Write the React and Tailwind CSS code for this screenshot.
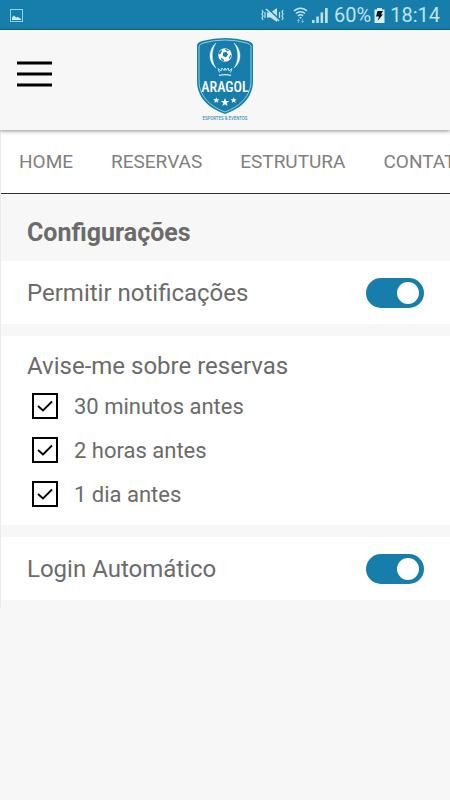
import React, { useState } from 'react';

const navItems = ['HOME', 'RESERVAS', 'ESTRUTURA', 'CONTATO'];

const StatusBar = () => (
    <div className="flex h-[30px] items-center justify-between border-b border-[#136a8f] bg-[#177eab] px-[10px] pt-px text-[#bfe3f0]">
        <svg width="13" height="13" viewBox="0 0 13 13" fill="none" aria-hidden="true">
            <rect x="0.5" y="0.5" width="12" height="12" stroke="#8fd0ea" />
            <path d="M2 11V8.5L4 6.5L6 8.5L8 8L11 10V11Z" fill="#c8ecf8" />
        </svg>
        <div className="flex items-center">
            <svg width="23" height="18" viewBox="0 0 23 18" fill="none" stroke="currentColor" aria-hidden="true">
                <path d="M6 6.5H9.5L16 2V16L9.5 11.5H6Z" fill="currentColor" stroke="none" />
                <path d="M6 2L18.5 13.5" stroke="#177eab" strokeWidth="1.6" />
                <path d="M5 3L18 15" strokeWidth="1.6" />
                <path d="M1 4L2 6L1 8L2 10L1 12L2 14M4 6V12" strokeWidth="1.2" />
                <path d="M22 4L21 6L22 8L21 10L22 12L21 14M18.5 6V12" strokeWidth="1.2" />
            </svg>
            <svg className="ml-[9px]" width="15" height="18" viewBox="0 0 15 18" fill="none" stroke="currentColor" aria-hidden="true">
                <path d="M1 5C4.5 1.2 10.5 1.2 14 5M3 7.5C5.5 5 9.5 5 12 7.5M5 10C6.5 8.6 8.5 8.6 10 10" strokeWidth="1.5" />
                <circle cx="7.5" cy="11.7" r="1" fill="currentColor" stroke="none" />
                <path d="M5.5 17V13.5M4 15L5.5 13.5L7 15M9.5 13V16.5M8 15L9.5 16.5L11 15" strokeWidth="0.8" opacity="0.65" />
            </svg>
            <svg className="ml-1" width="16" height="16" viewBox="0 0 16 16" fill="currentColor" aria-hidden="true">
                <path d="M0 13H2.5V16H0ZM4.3 9.5H6.8V16H4.3ZM8.6 5.5H11.1V16H8.6ZM13 1H15.7V16H13Z" />
            </svg>
            <span className="ml-[6px] text-[20px] leading-7">60%</span>
            <svg className="ml-[3px]" width="11" height="15" viewBox="0 0 11 15" aria-hidden="true">
                <path d="M3 0H8V1.5H10.5V15H0.5V1.5H3Z" fill="#d9eff7" />
                <path d="M3.5 3H9L7 6.5H9L3.5 13L5 8.5H2Z" fill="#0b1a20" />
            </svg>
            <span className="ml-[5px] text-[20px] leading-7">18:14</span>
        </div>
    </div>
);

const Logo = () => (
    <svg width="62" height="86" viewBox="0 0 62 86" role="img" aria-label="Aragol Esportes & Eventos">
        <path
            d="M3 8Q4 5 8 4Q20 1 31 1Q42 1 54 4Q58 5 59 8V44C59 60 48 71 31 77C14 71 3 60 3 44Z"
            fill="#177eab"
        />
        <path
            d="M5 9Q6 7 9 6Q20 3 31 3Q42 3 53 6Q56 7 57 9V44C57 58 47 69 31 75C15 69 5 58 5 44Z"
            fill="none"
            stroke="#b9deec"
            strokeWidth="0.8"
        />
        <path d="M22 6C14 13 14 25 22 31C17 24 17 13 22 6ZM40 6C48 13 48 25 40 31C45 24 45 13 40 6Z" fill="#fff" stroke="#fff" strokeWidth="0.4" />
        <circle cx="31" cy="18" r="6.8" fill="#fff" />
        <path d="M29.2 15.5L32.5 15L34 17.8L31.8 20.3L28.8 19ZM25.2 15L27.3 12.7L28 14.2L26.3 17L24.6 17.5ZM31.3 11.5L35 13.2L34 14.2L31.4 13ZM36.6 17.5L37.3 19L35.6 22L34.8 21ZM27 20.8L29.5 22.3L30.2 24.4L27.4 23.2Z" fill="#177eab" />
        <path d="M25.5 35.5L24 31.5L27 34L27.8 31L30 33.5L31 31L32 33.5L34.2 31L35 34L38 31.5L36.5 35.5" fill="none" stroke="#d5edf6" strokeWidth="0.9" />
        <path d="M25 38.4Q31 36.8 37 38.4" fill="none" stroke="#d5edf6" strokeWidth="1.4" />
        <text x="31" y="55" textAnchor="middle" fontSize="14" fontWeight="500" fill="#fff" fontFamily="'Liberation Sans Narrow', 'Roboto Condensed', Roboto, sans-serif">ARAGOL</text>
        <path d="M22.3 60.2L23.1 62.3H25.4L23.6 63.7L24.3 66L22.3 64.6L20.3 66L21 63.7L19.2 62.3H21.5Z" fill="#fff" />
        <path d="M31 61L32.1 64.1H35.2L32.7 66L33.6 69L31 67.2L28.4 69L29.3 66L26.8 64.1H29.9Z" fill="#fff" />
        <path d="M39.7 60.2L40.5 62.3H42.8L41 63.7L41.7 66L39.7 64.6L37.7 66L38.4 63.7L36.6 62.3H38.9Z" fill="#fff" />
        <text x="31" y="83" textAnchor="middle" fontSize="5" fill="#177eab" fontFamily="'Liberation Sans Narrow', 'Roboto Condensed', Roboto, sans-serif">ESPORTES &amp; EVENTOS</text>
    </svg>
);

const Header = () => (
    <header className="relative grid h-[100px] grid-cols-[1fr_auto_1fr] items-center bg-[#f7f7f7] px-4 shadow-[0_1px_4px_rgba(0,0,0,0.45)]">
        <button type="button" aria-label="Menu" className="-mt-3 w-[37px]">
            <svg width="37" height="28" viewBox="0 0 37 28" aria-hidden="true">
                <path d="M1 3H36M1 14H36M1 25H36" stroke="#000" strokeWidth="3.2" />
            </svg>
        </button>
        <Logo />
    </header>
);

const Toggle = ({ id, label, checked, onChange }) => (
    <section className="flex h-[63px] items-center justify-between bg-white px-[26px] pt-px">
        <label htmlFor={id} className="text-[24px] leading-8">{label}</label>
        <span className="relative flex">
            <input
                type="checkbox"
                role="switch"
                id={id}
                checked={checked}
                onChange={onChange}
                className="peer h-[30px] w-[58px] cursor-pointer appearance-none rounded-full bg-gray-400 checked:bg-[#177eab]"
            />
            <span className="pointer-events-none absolute left-[5px] top-1 size-[22px] rounded-full bg-white peer-checked:left-auto peer-checked:right-[5px]" />
        </span>
    </section>
);

const CheckItem = ({ id, label, checked, onChange }) => (
    <li className="flex h-11 items-center gap-4">
        <span className="relative flex">
            <input
                type="checkbox"
                id={id}
                checked={checked}
                onChange={onChange}
                className="peer size-[26px] cursor-pointer appearance-none border-2 border-black bg-white"
            />
            <svg className="pointer-events-none absolute inset-0 hidden peer-checked:block" width="26" height="26" viewBox="0 0 26 26" fill="none" aria-hidden="true">
                <path d="M6 13L11 17.5L20 8.5" stroke="#000" strokeWidth="1.8" />
            </svg>
        </span>
        <label htmlFor={id} className="pt-[2px] text-[22px] leading-7">{label}</label>
    </li>
);

const App = () => {
    const [settings, setSettings] = useState({
        notifications: true,
        autoLogin: true,
        min30: true,
        hours2: true,
        day1: true
    });

    const toggle = (e) => {
        setSettings({ ...settings, [e.target.id]: e.target.checked });
    };

    return (
        <div className="min-h-screen overflow-hidden bg-[#f7f7f7] font-['Roboto',sans-serif] text-[#6b6b6b]">
            <StatusBar />
            <Header />
            <div className="border-l border-[#ebebeb] pb-2">
                <nav className="flex h-16 items-center gap-[38px] overflow-hidden border-b border-[#333] bg-white pl-[18px] text-[19px] text-[#808080]">
                    {navItems.map((item) => (
                        <a key={item} href="#" className="leading-7">{item}</a>
                    ))}
                </nav>
                <main>
                    <h1 className="flex h-[67px] items-center pl-[26px] pt-[10px] text-[25px] font-bold leading-8">Configurações</h1>
                    <div className="flex flex-col gap-3">
                        <Toggle id="notifications" label="Permitir notificações" checked={settings.notifications} onChange={toggle} />
                        <section className="bg-white pb-[9px] pl-[26px] pt-[14px]">
                            <h2 className="text-[24px] leading-8">Avise-me sobre reservas</h2>
                            <ul className="pl-[5px] pt-[2px]">
                                <CheckItem id="min30" label="30 minutos antes" checked={settings.min30} onChange={toggle} />
                                <CheckItem id="hours2" label="2 horas antes" checked={settings.hours2} onChange={toggle} />
                                <CheckItem id="day1" label="1 dia antes" checked={settings.day1} onChange={toggle} />
                            </ul>
                        </section>
                        <Toggle id="autoLogin" label="Login Automático" checked={settings.autoLogin} onChange={toggle} />
                    </div>
                </main>
            </div>
        </div>
    );
};

export default App;
